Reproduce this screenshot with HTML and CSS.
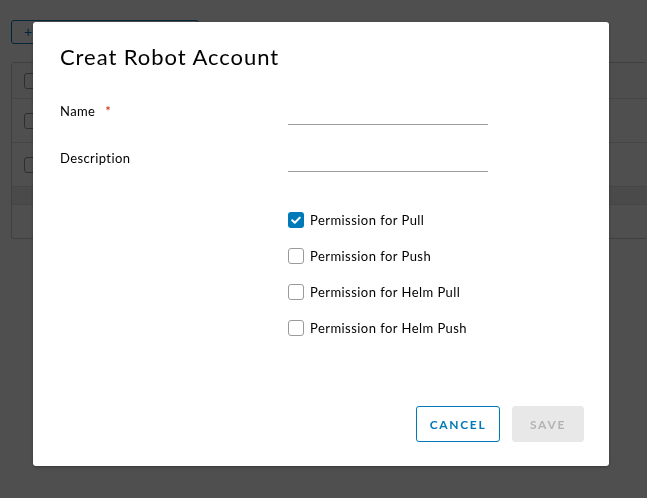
FILE: index.html
```html
<!DOCTYPE html>
<html lang="en">
<head>
  <meta charset="UTF-8">
  <meta name="viewport" content="width=device-width, initial-scale=1.0">
  <title>Robot Accounts</title>
  <link rel="stylesheet" href="styles.css">
</head>
<body>

<!-- Page behind the dialog (dimmed) -->
<div class="page">
  <div class="toolbar">
    <button class="btn-new"><span class="plus">+</span></button>
  </div>
  <div class="grid">
    <div class="grid-row head"><span class="box"></span></div>
    <div class="grid-row tall"><span class="box"></span></div>
    <div class="grid-row tall"><span class="box"></span></div>
    <div class="grid-band"></div>
    <div class="grid-foot"></div>
  </div>
</div>

<div class="backdrop"></div>

<!-- Create robot account dialog -->
<div class="modal">
  <h3 class="modal-title">Creat Robot Account</h3>

  <form class="form">
    <div class="form-row">
      <label class="form-label required">Name</label>
      <div class="field"><input type="text" class="text-input"></div>
    </div>
    <div class="form-row">
      <label class="form-label">Description</label>
      <div class="field"><input type="text" class="text-input"></div>
    </div>

    <div class="perms">
      <label class="perm"><span class="check checked">
        <svg viewBox="0 0 16 16" width="16" height="16"><path d="M4.2 8.3l2.6 2.5 5-5.2" fill="none" stroke="#fff" stroke-width="2" stroke-linecap="round" stroke-linejoin="round"/></svg>
      </span>Permission for Pull</label>
      <label class="perm"><span class="check"></span>Permission for Push</label>
      <label class="perm"><span class="check"></span>Permission for Helm Pull</label>
      <label class="perm"><span class="check"></span>Permission for Helm Push</label>
    </div>
  </form>

  <div class="modal-footer">
    <button class="btn btn-outline">Cancel</button>
    <button class="btn btn-disabled" disabled>Save</button>
  </div>
</div>

</body>
</html>
```

FILE: styles.css
```css
body {
  margin: 0;
  background-color: #fff;
  font-family: "Lato", "Open Sans", sans-serif;
  color: #000;
  width: 647px;
  height: 498px;
  overflow: hidden;
}

/* Background page */
.page {
  padding: 20px 0 0 11px;
}

.toolbar {
  height: 42px;
}

.btn-new {
  width: 188px;
  height: 24px;
  border: 1px solid #0079b8;
  border-radius: 3px;
  background: #fff;
  text-align: left;
  padding: 0 0 0 12px;
  color: #0079b8;
  font-size: 14px;
}

.grid {
  border: 1px solid #ccc;
  border-radius: 3px;
  border-right: none;
}

.grid-row {
  border-bottom: 1px solid #ddd;
  padding-left: 12px;
  display: flex;
  align-items: center;
}

.grid-row.head {
  height: 35px;
  background: #fafafa;
}

.grid-row.tall {
  height: 43px;
}

.box {
  width: 14px;
  height: 14px;
  border: 1px solid #999;
  border-radius: 3px;
}

.grid-band {
  height: 17px;
  background: #eee;
  border-bottom: 1px solid #ddd;
}

.grid-foot {
  height: 33px;
}

.backdrop {
  position: fixed;
  inset: 0;
  background: rgba(0, 0, 0, 0.69);
}

/* Dialog */
.modal {
  position: absolute;
  left: 33px;
  top: 22px;
  width: 576px;
  height: 444px;
  box-sizing: border-box;
  background: #fff;
  border-radius: 3px;
  box-shadow: 0 1px 3px rgba(0, 0, 0, 0.3);
  padding: 21px 25px 24px 27px;
  display: flex;
  flex-direction: column;
}

.modal-title {
  margin: 0;
  font-size: 22px;
  font-weight: 400;
  line-height: 28px;
  letter-spacing: 0.95px;
  color: #000;
}

.form {
  margin-top: 7px;
  flex: 1;
}

.form-row {
  display: flex;
  align-items: flex-end;
  height: 47px;
}

.form-label {
  width: 228px;
  font-size: 13px;
  letter-spacing: 0.4px;
  color: #000;
  padding-bottom: 6px;
}

.form-label.required::after {
  content: "*";
  color: #c92100;
  margin-left: 10px;
}

.text-input {
  width: 200px;
  border: none;
  border-bottom: 1px solid #9a9a9a;
  height: 24px;
  padding: 0;
  outline: none;
  font-size: 13px;
}

.perms {
  margin-top: 40px;
  padding-left: 228px;
  display: flex;
  flex-direction: column;
  gap: 20px;
}

.perm {
  display: flex;
  align-items: center;
  gap: 6px;
  font-size: 13px;
  letter-spacing: 0.45px;
  color: #000;
  height: 16px;
}

.check {
  width: 14px;
  height: 14px;
  border: 1px solid #9a9a9a;
  border-radius: 3px;
  display: flex;
}

.check.checked {
  width: 16px;
  height: 16px;
  border: none;
  background: #0079b8;
}

.modal-footer {
  display: flex;
  justify-content: flex-end;
  gap: 12px;
}

.btn {
  height: 36px;
  padding: 0 12px;
  border-radius: 3px;
  font-family: "Lato", sans-serif;
  font-size: 12px;
  font-weight: 700;
  letter-spacing: 0.14em;
  text-transform: uppercase;
}

.btn-outline {
  width: 84px;
  border: 1px solid #0079b8;
  background: #fff;
  color: #0079b8;
}

.btn-disabled {
  width: 72px;
  border: 1px solid #e8e8e8;
  background: #e8e8e8;
  color: #b3b3b3;
}
```
